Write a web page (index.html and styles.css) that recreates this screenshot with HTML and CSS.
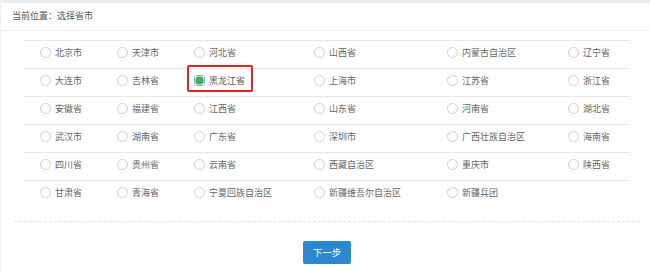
FILE: index.html
```html
<!DOCTYPE html>
<html lang="zh-CN">
  <head>
    <meta charset="UTF-8" />
    <meta name="viewport" content="width=device-width, initial-scale=1.0" />
    <title>选择省市</title>
    <link rel="stylesheet" href="styles.css">
  </head>
  <body>
    <div class="panel">
      <div class="panel-header">当前位置：选择省市</div>

      <div class="city-grid">
        <label class="city"><span class="radio"></span>北京市</label>
        <label class="city"><span class="radio"></span>天津市</label>
        <label class="city"><span class="radio"></span>河北省</label>
        <label class="city"><span class="radio"></span>山西省</label>
        <label class="city"><span class="radio"></span>内蒙古自治区</label>
        <label class="city"><span class="radio"></span>辽宁省</label>

        <label class="city"><span class="radio"></span>大连市</label>
        <label class="city"><span class="radio"></span>吉林省</label>
        <label class="city"><span class="picked"><span class="radio checked"></span>黑龙江省</span></label>
        <label class="city"><span class="radio"></span>上海市</label>
        <label class="city"><span class="radio"></span>江苏省</label>
        <label class="city"><span class="radio"></span>浙江省</label>

        <label class="city"><span class="radio"></span>安徽省</label>
        <label class="city"><span class="radio"></span>福建省</label>
        <label class="city"><span class="radio"></span>江西省</label>
        <label class="city"><span class="radio"></span>山东省</label>
        <label class="city"><span class="radio"></span>河南省</label>
        <label class="city"><span class="radio"></span>湖北省</label>

        <label class="city"><span class="radio"></span>武汉市</label>
        <label class="city"><span class="radio"></span>湖南省</label>
        <label class="city"><span class="radio"></span>广东省</label>
        <label class="city"><span class="radio"></span>深圳市</label>
        <label class="city"><span class="radio"></span>广西壮族自治区</label>
        <label class="city"><span class="radio"></span>海南省</label>

        <label class="city"><span class="radio"></span>四川省</label>
        <label class="city"><span class="radio"></span>贵州省</label>
        <label class="city"><span class="radio"></span>云南省</label>
        <label class="city"><span class="radio"></span>西藏自治区</label>
        <label class="city"><span class="radio"></span>重庆市</label>
        <label class="city"><span class="radio"></span>陕西省</label>

        <label class="city"><span class="radio"></span>甘肃省</label>
        <label class="city"><span class="radio"></span>青海省</label>
        <label class="city"><span class="radio"></span>宁夏回族自治区</label>
        <label class="city"><span class="radio"></span>新疆维吾尔自治区</label>
        <label class="city"><span class="radio"></span>新疆兵团</label>
        <div class="city"></div>
      </div>

      <div class="panel-footer">
        <button type="button" class="btn">下一步</button>
      </div>
    </div>
  </body>
</html>
```

FILE: styles.css
```css
body {
  margin: 0;
  padding-top: 3px;
  background-color: #eaedf1;
  font-family: "Noto Sans CJK SC", "Noto Sans", sans-serif;
  color: #666;
}
.panel {
  background-color: white;
  height: 268px;
  border-left: 1px solid #eef1f5;
}
.panel-header {
  height: 27px;
  line-height: 25px;
  padding-left: 11px;
  font-size: 9px;
  color: #555;
  border-bottom: 1px solid #ebebeb;
}
.city-grid {
  display: grid;
  grid-template-columns: 77px 77px 120px 133px 121px 78px;
  width: 606px;
  margin: 9px 0 0 23px;
}
.city {
  display: flex;
  align-items: flex-start;
  height: 27px;
  padding-left: 16px;
  border-top: 1px solid #e6e6e6;
  font-size: 9px;
  line-height: 11px;
  padding-top: 6px;
  box-sizing: border-box;
  height: 28px;
  white-space: nowrap;
}
.radio {
  display: inline-block;
  width: 11px;
  height: 11px;
  margin-right: 4px;
  border: 1px solid #cfcfcf;
  border-radius: 50%;
  box-sizing: border-box;
  background-color: white;
}
.radio.checked {
  border: 1px solid #8db6e6;
  border-radius: 3px;
  background-color: #f2f7fd;
  position: relative;
}
.radio.checked::after {
  content: "";
  position: absolute;
  left: 1px;
  top: 1px;
  width: 7px;
  height: 7px;
  border-radius: 50%;
  background-color: #3fb34f;
  box-shadow: 0 0 0 0.5px #2f8f3c;
}
.picked {
  display: inline-flex;
  align-items: flex-start;
  position: relative;
  color: #555;
}
.picked::before {
  content: "";
  position: absolute;
  left: -7px;
  right: -8px;
  top: -10px;
  bottom: -6px;
  border: 2px solid #e3231f;
  border-radius: 2px;
}
.panel-footer {
  margin: 13px 10px 0 13px;
  padding-top: 15px;
  border-top: 1px dashed #e2e2e2;
  text-align: center;
}
.btn {
  width: 48px;
  height: 23px;
  padding: 0;
  border: none;
  border-radius: 2px;
  background-color: #2d89cf;
  color: white;
  font-family: "Noto Sans CJK SC", "Noto Sans", sans-serif;
  font-size: 9.5px;
  cursor: pointer;
}
```
